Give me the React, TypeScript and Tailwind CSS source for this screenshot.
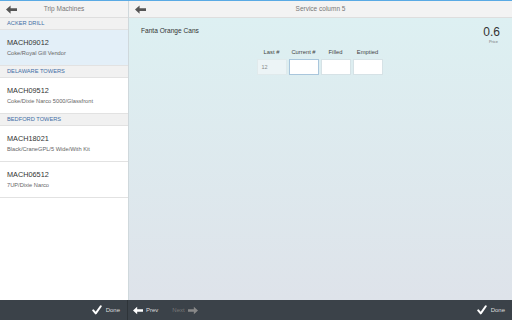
import React from "react";

const Check = () => (
  <svg width="10" height="10" viewBox="0 0 12 12" className="mr-[4px]">
    <path d="M1.5 6.5 L4.5 10 L10.5 1.5" fill="none" stroke="#fff" strokeWidth="2.4" strokeLinecap="round" strokeLinejoin="round" />
  </svg>
);

const ArrowLeft = ({ color = "#555", w = 12 }: { color?: string; w?: number }) => (
  <svg width={w} height="9" viewBox="0 0 12 9">
    <path d="M0 4.5 L5 0 L5 3 L12 3 L12 6 L5 6 L5 9 Z" fill={color} />
  </svg>
);

const ArrowRight = ({ color = "#777", w = 12 }: { color?: string; w?: number }) => (
  <svg width={w} height="9" viewBox="0 0 12 9">
    <path d="M12 4.5 L7 0 L7 3 L0 3 L0 6 L7 6 L7 9 Z" fill={color} />
  </svg>
);

const Section = ({ title }: { title: string }) => (
  <div className="h-[12px] bg-[#f1f1f1] border-b border-[#e2e2e2] flex items-center pl-[7px] text-[5.7px] text-[#3f6ea6]">
    {title}
  </div>
);

const Row = ({ id, desc, selected }: { id: string; desc: string; selected?: boolean }) => (
  <div className={`h-[36px] border-b border-[#e2e2e2] flex flex-col justify-center pl-[7px] ${selected ? "bg-[#e3eff8]" : "bg-white"}`}>
    <div className="text-[7.3px] text-[#333] leading-[9px]">{id}</div>
    <div className="text-[5.7px] text-[#666] leading-[8px] mt-[2px]">{desc}</div>
  </div>
);

export default function App() {
  return (
    <div className="w-[512px] h-[320px] flex flex-col overflow-hidden" style={{ fontFamily: '"Liberation Sans", Arial, sans-serif' }}>
      <div className="h-[1px] bg-[#5aaae4]" />
      <div className="flex flex-1 min-h-0">
        <div className="w-[128px] flex flex-col bg-white">
          <div className="h-[17px] bg-[#f3f3f3] border-b border-[#dedede] flex items-center relative">
            <div className="absolute left-[6px] top-[4px]"><ArrowLeft color="#555" w={11} /></div>
            <div className="flex-1 text-center text-[6.5px] text-[#777]">Trip Machines</div>
          </div>
          <Section title="ACKER DRILL" />
          <Row id="MACH09012" desc="Coke/Royal Gill Vendor" selected />
          <Section title="DELAWARE TOWERS" />
          <Row id="MACH09512" desc="Coke/Dixie Narco 5000/Glassfront" />
          <Section title="BEDFORD TOWERS" />
          <Row id="MACH18021" desc="Black/CraneGPL/5 Wide/With Kit" />
          <Row id="MACH06512" desc="7UP/Dixie Narco" />
        </div>
        <div className="flex-1 flex flex-col border-l border-[#cfd8dc]">
          <div className="h-[17px] bg-[#f3f3f3] border-b border-[#dedede] flex items-center relative">
            <div className="absolute left-[6px] top-[4px]"><ArrowLeft color="#555" w={11} /></div>
            <div className="flex-1 text-center text-[6.5px] text-[#777]">Service column 5</div>
          </div>
          <div className="flex-1 bg-gradient-to-b from-[#ddf0f2] to-[#dee3ea] px-[12px] pt-[8px]">
            <div className="flex justify-between">
              <div className="text-[6.6px] text-[#333]">Fanta Orange Cans</div>
              <div className="flex flex-col items-end">
                <div className="text-[12px] leading-[12px] text-[#333]">0.6</div>
                <div className="text-[4px] text-[#777] mt-[1px] mr-[2px]">Price</div>
              </div>
            </div>
            <div className="flex justify-center mt-[3px] ml-[-2px]">
              <div className="grid grid-cols-4 gap-x-[2px]">
                {["Last #", "Current #", "Filled", "Emptied"].map((l) => (
                  <div key={l} className="w-[30px] text-center text-[5.8px] text-[#444] mb-[2px]">{l}</div>
                ))}
                <div className="w-[30px] h-[16px] bg-[#ecf4f6] border border-[#e0eaec] text-[5.5px] text-[#888] flex items-center pl-[4px]">12</div>
                <div className="w-[30px] h-[16px] bg-white border border-[#a9c6dc]" />
                <div className="w-[30px] h-[16px] bg-white border border-[#d6e2e6]" />
                <div className="w-[30px] h-[16px] bg-white border border-[#d6e2e6]" />
              </div>
            </div>
          </div>
        </div>
      </div>
      <div className="h-[20px] bg-[#3b4249] flex text-[6px]">
        <div className="w-[128px] flex items-center justify-end pr-[7px] border-r border-[#2e3439] text-[#ddd]">
          <Check />
          <span>Done</span>
        </div>
        <div className="flex-1 flex items-center pl-[5px] pr-[7px]">
          <ArrowLeft color="#fff" w={10} />
          <span className="ml-[3px] text-[#ddd]">Prev</span>
          <span className="ml-[14px] text-[#777]">Next</span>
          <span className="ml-[3px]"><ArrowRight color="#888" w={10} /></span>
          <div className="flex-1" />
          <Check />
          <span className="text-[#ddd]">Done</span>
        </div>
      </div>
    </div>
  );
}
